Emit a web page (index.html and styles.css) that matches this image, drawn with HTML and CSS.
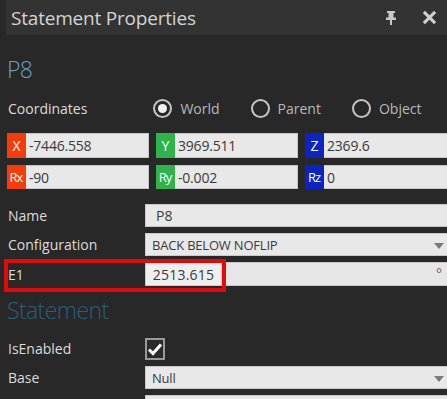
FILE: index.html
```html
<!DOCTYPE html>
<html lang="en">
<head>
    <meta charset="UTF-8">
    <meta name="viewport" content="width=device-width, initial-scale=1.0">
    <title>Statement Properties</title>
    <link rel="stylesheet" href="styles.css">
</head>
<body>
    <div class="panel-header">
        <span class="panel-title">Statement Properties</span>
        <div class="panel-actions">
            <svg class="pin-icon" width="12" height="16" viewBox="0 0 12 16">
                <path d="M2 1h8v2H8.5v4.5H11V10H7v5H5v-5H1V7.5h2.5V3H2z" fill="#c8c8c8"/>
            </svg>
            <svg class="close-icon" width="15" height="15" viewBox="0 0 16 16">
                <path d="M2 2L14 14M14 2L2 14" stroke="#d0d0d0" stroke-width="3.2"/>
            </svg>
        </div>
    </div>

    <div class="panel-body">
        <h2 class="section-title">P8</h2>

        <div class="coord-row">
            <span class="prop-label">Coordinates</span>
            <div class="radio-group">
                <label class="radio checked"><span class="radio-dot"></span>World</label>
                <label class="radio"><span class="radio-dot"></span>Parent</label>
                <label class="radio"><span class="radio-dot"></span>Object</label>
            </div>
        </div>

        <div class="coord-grid">
            <div class="coord-field"><span class="axis axis-x">X</span><span class="coord-value">-7446.558</span></div>
            <div class="coord-field"><span class="axis axis-y">Y</span><span class="coord-value">3969.511</span></div>
            <div class="coord-field"><span class="axis axis-z">Z</span><span class="coord-value">2369.6</span></div>
            <div class="coord-field"><span class="axis axis-x small">Rx</span><span class="coord-value">-90</span></div>
            <div class="coord-field"><span class="axis axis-y small">Ry</span><span class="coord-value">-0.002</span></div>
            <div class="coord-field"><span class="axis axis-z small">Rz</span><span class="coord-value">0</span></div>
        </div>

        <div class="prop-grid">
            <span class="prop-label">Name</span>
            <div class="field field-name">P8</div>

            <span class="prop-label">Configuration</span>
            <div class="field field-select">BACK BELOW NOFLIP<span class="arrow"></span></div>

            <div class="highlight-row">
                <span class="prop-label">E1</span>
                <div class="field field-unit">
                    <span class="unit-value">2513.615</span>
                    <span class="unit-sign">°</span>
                </div>
                <div class="highlight-box"></div>
            </div>
        </div>

        <h2 class="section-title muted">Statement</h2>

        <div class="prop-grid">
            <span class="prop-label">IsEnabled</span>
            <div class="check-cell">
                <span class="checkbox">
                    <svg width="16" height="14" viewBox="0 0 16 14">
                        <path d="M2 7.5L6 11.5L14 2.5" stroke="#ffffff" stroke-width="3" fill="none"/>
                    </svg>
                </span>
            </div>

            <span class="prop-label">Base</span>
            <div class="field field-select">Null<span class="arrow"></span></div>

            <span class="prop-label"></span>
            <div class="field"></div>
        </div>
    </div>
</body>
</html>
```

FILE: styles.css
```css
* {
    margin: 0;
    padding: 0;
    box-sizing: border-box;
}

body {
    font-family: "Open Sans", "Noto Sans", sans-serif;
    background-color: #282828;
    color: #d8d8d8;
    height: 399px;
    overflow: hidden;
}

.panel-header {
    height: 35px;
    margin-left: 6px;
    background-color: #333333;
    display: flex;
    align-items: center;
    justify-content: space-between;
    padding-left: 5px;
}

.panel-title {
    font-size: 19px;
    color: #d4d4d4;
    letter-spacing: -0.2px;
}

.panel-actions {
    display: flex;
    align-items: center;
    gap: 25px;
    padding-right: 10px;
}

.pin-icon {
    margin-top: 1px;
}

.panel-body {
    padding-left: 7px;
}

.section-title {
    font-weight: 300;
    font-size: 23px;
    line-height: 32px;
    color: #67a0c2;
    margin-top: 18px;
    letter-spacing: -0.6px;
}

.section-title.muted {
    color: #26617f;
    margin-top: 8px;
}

.prop-label {
    font-size: 14px;
    color: #dcdcdc;
    padding-left: 1px;
    display: flex;
    align-items: center;
}

.coord-row {
    display: flex;
    align-items: center;
    height: 24px;
    margin-top: 11px;
}

.radio-group {
    display: flex;
    gap: 31px;
    margin-left: 66px;
}

.radio {
    display: flex;
    align-items: center;
    gap: 8px;
    font-size: 14px;
    color: #b8b8b8;
}

.radio-dot {
    width: 19px;
    height: 19px;
    border: 2px solid #c4c4c4;
    border-radius: 50%;
    display: flex;
    align-items: center;
    justify-content: center;
}

.radio.checked .radio-dot::after {
    content: '';
    width: 9px;
    height: 9px;
    border-radius: 50%;
    background-color: #f2f2f2;
}

.coord-grid {
    display: grid;
    grid-template-columns: 142px 142px 150px;
    column-gap: 7px;
    row-gap: 7px;
    margin-top: 13px;
}

.coord-field {
    display: flex;
    height: 25px;
    background-color: #e8e8e8;
    border: 1px solid #c6c6c6;
    border-left: none;
}

.coord-field:nth-child(n+4) {
    height: 24px;
}

.axis {
    width: 19px;
    display: flex;
    align-items: center;
    justify-content: center;
    color: #ffffff;
    font-size: 14px;
    margin-top: -1px;
    margin-bottom: -1px;
}

.axis.small {
    font-size: 13px;
    letter-spacing: -1px;
    padding-right: 1px;
}

.axis-x {
    background-color: #f53d0c;
}

.axis-y {
    background-color: #2fb34b;
}

.axis-z {
    background-color: #0b24c2;
}

.coord-value {
    font-size: 14px;
    color: #3a3a3a;
    padding-left: 3px;
    display: flex;
    align-items: center;
    letter-spacing: -0.2px;
}

.prop-grid {
    display: grid;
    grid-template-columns: 138px 1fr;
    row-gap: 6px;
    margin-top: 15px;
}

.section-title + .prop-grid {
    margin-top: 11px;
}

.field {
    height: 23px;
    background-color: #e8e8e8;
    border: 1px solid #c8c8c8;
    border-right: none;
    font-size: 14px;
    color: #3a3a3a;
    display: flex;
    align-items: center;
    padding-left: 6px;
    position: relative;
}

.field-name {
    padding-left: 10px;
}

.field-select {
    font-size: 13px;
    letter-spacing: -0.2px;
}

.arrow {
    position: absolute;
    right: 3px;
    top: 9px;
    border-left: 5px solid transparent;
    border-right: 5px solid transparent;
    border-top: 6px solid #7a7a7a;
}

.highlight-row {
    grid-column: 1 / 3;
    display: grid;
    grid-template-columns: 138px 1fr;
    position: relative;
}

.field-unit {
    height: 24px;
    padding-left: 0;
    background-color: #e6e6e6;
}

.unit-value {
    width: 76px;
    height: 100%;
    display: flex;
    align-items: center;
    justify-content: center;
    background-color: #efefef;
    border-right: 1px solid #cfcfcf;
    letter-spacing: 0.2px;
}

.unit-sign {
    position: absolute;
    right: 5px;
    top: 1px;
    color: #666;
}

.highlight-box {
    position: absolute;
    left: -3px;
    top: -3px;
    width: 222px;
    height: 33px;
    border: 4px solid #e30a0a;
    pointer-events: none;
}

.check-cell {
    height: 23px;
    display: flex;
    align-items: center;
}

.checkbox {
    width: 20px;
    height: 22px;
    border: 2px solid #9a9a9a;
    display: flex;
    align-items: center;
    justify-content: center;
    background-color: #2a2a2a;
}
```
